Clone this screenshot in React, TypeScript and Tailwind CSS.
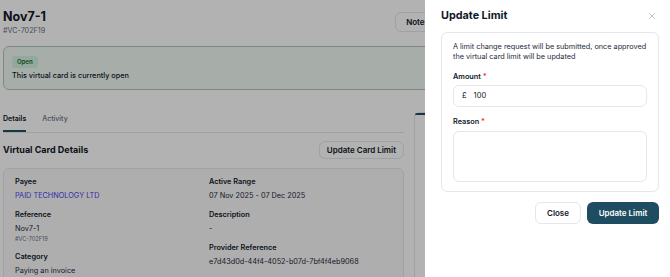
import { X } from 'lucide-react';

function Field({ label, value, sub, link }: { label: string; value: string; sub?: string; link?: boolean }) {
    return (
        <div>
            <div className="text-[7.3px] font-semibold leading-[10px] text-gray-900">{label}</div>
            <div className={`mt-[4px] text-[7.3px] leading-[10px] ${link ? 'text-[#4f3ff0]' : 'text-gray-800'}`}>{value}</div>
            {sub && <div className="mt-px text-[5.6px] leading-[8px] text-gray-500">{sub}</div>}
        </div>
    );
}

export default function App() {
    return (
        <div className="relative w-[670px] h-[277px] overflow-hidden bg-white font-['Inter',sans-serif]">
            <div className="w-[460px] pl-[3px] pt-[9px]">
                <div className="flex w-[437px] items-start justify-between">
                    <div>
                        <h1 className="text-[12.5px] font-bold leading-[16px] text-gray-900">Nov7-1</h1>
                        <p className="mt-px text-[7.2px] leading-[10px] text-gray-500">#VC-702F19</p>
                    </div>
                    <button className="mt-[3px] h-[20px] rounded-md border border-gray-200 px-[10px] text-[8px] font-semibold text-gray-900">Notes</button>
                </div>

                <div className="mt-[10px] flex h-[44px] flex-col items-start rounded-md border border-[#b1c5b7] bg-[#effaf4] pl-[8px] pt-[9px]">
                    <span className="block h-[12px] rounded-[3px] bg-[#d3f3de] px-[5px] text-[6px] font-semibold leading-[12px] text-[#166534]">Open</span>
                    <p className="mt-[3px] text-[7.3px] font-medium leading-[10px] text-gray-900">This virtual card is currently open</p>
                </div>

                <div className="mt-[23px] flex gap-[10px]">
                    <div className="w-[401px] shrink-0">
                        <div className="flex gap-[16px] border-b border-gray-200 pt-px text-[7px] leading-[10px]">
                            <span className="border-b-2 border-[#1f4e63] pb-[6px] font-semibold text-gray-900">Details</span>
                            <span className="pb-[6px] font-medium text-gray-500">Activity</span>
                        </div>

                        <div className="mt-[8px] flex items-center justify-between">
                            <h2 className="text-[9px] font-bold leading-[12px] text-gray-900">Virtual Card Details</h2>
                            <button className="h-[18px] rounded-md border border-gray-200 px-[7px] text-[8px] font-semibold text-gray-900">Update Card Limit</button>
                        </div>

                        <div className="mt-[9px] grid h-[120px] grid-cols-2 rounded-md border border-gray-200 bg-gray-50 pl-[11px] pt-[8px]">
                            <div className="flex flex-col gap-[9px]">
                                <Field label="Payee" value="PAID TECHNOLOGY LTD" link />
                                <Field label="Reference" value="Nov7-1" sub="#VC-702F19" />
                                <Field label="Category" value="Paying an invoice" />
                            </div>
                            <div className="flex flex-col gap-[9px]">
                                <Field label="Active Range" value="07 Nov 2025 - 07 Dec 2025" />
                                <Field label="Description" value="-" />
                                <Field label="Provider Reference" value="e7d43d0d-44f4-4052-b07d-7bf4f4eb9068" />
                            </div>
                        </div>
                    </div>

                    <div className="mt-[-1px] h-[200px] w-[40px] shrink-0 rounded-t-md border border-gray-200">
                        <div className="h-[2px] w-full rounded-t-md bg-[#1f4e63]" />
                    </div>
                </div>
            </div>

            <div className="absolute inset-0 bg-black/30" />

            <div className="absolute right-0 top-0 flex h-full w-[245px] flex-col bg-white pl-[16px] pr-[11px]">
                <div className="flex items-center justify-between pt-[9px]">
                    <h3 className="text-[10.8px] font-bold leading-[14px] text-gray-900">Update Limit</h3>
                    <X className="mr-[2px] h-[10px] w-[10px] text-gray-400" strokeWidth={1.5} />
                </div>

                <div className="mt-[9px] rounded-md border border-gray-200 px-[11px] pt-[9px] pb-[9px]">
                    <p className="text-[7.3px] leading-[10px] text-gray-800">
                        A limit change request will be submitted, once approved
                        <br />
                        the virtual card limit will be updated
                    </p>

                    <label className="mt-[10px] block text-[7.3px] font-semibold leading-[10px] text-gray-900">
                        Amount <span className="text-red-500">*</span>
                    </label>
                    <div className="mt-[3px] flex h-[22px] items-center gap-[7px] rounded-md border border-gray-200 px-[8px] text-[7.5px] text-gray-900">
                        <span>£</span>
                        <span>100</span>
                    </div>

                    <label className="mt-[10px] block text-[7.3px] font-semibold leading-[10px] text-gray-900">
                        Reason <span className="text-red-500">*</span>
                    </label>
                    <div className="mt-[4px] h-[51px] rounded-md border border-gray-200" />
                </div>

                <div className="mt-[10px] flex justify-end gap-[6px]">
                    <button className="h-[22px] w-[46px] rounded-md border border-gray-200 text-[8px] font-semibold text-gray-900">Close</button>
                    <button className="h-[22px] w-[72px] rounded-md bg-[#1e4d62] text-[8px] font-semibold text-white">Update Limit</button>
                </div>
            </div>
        </div>
    );
}
